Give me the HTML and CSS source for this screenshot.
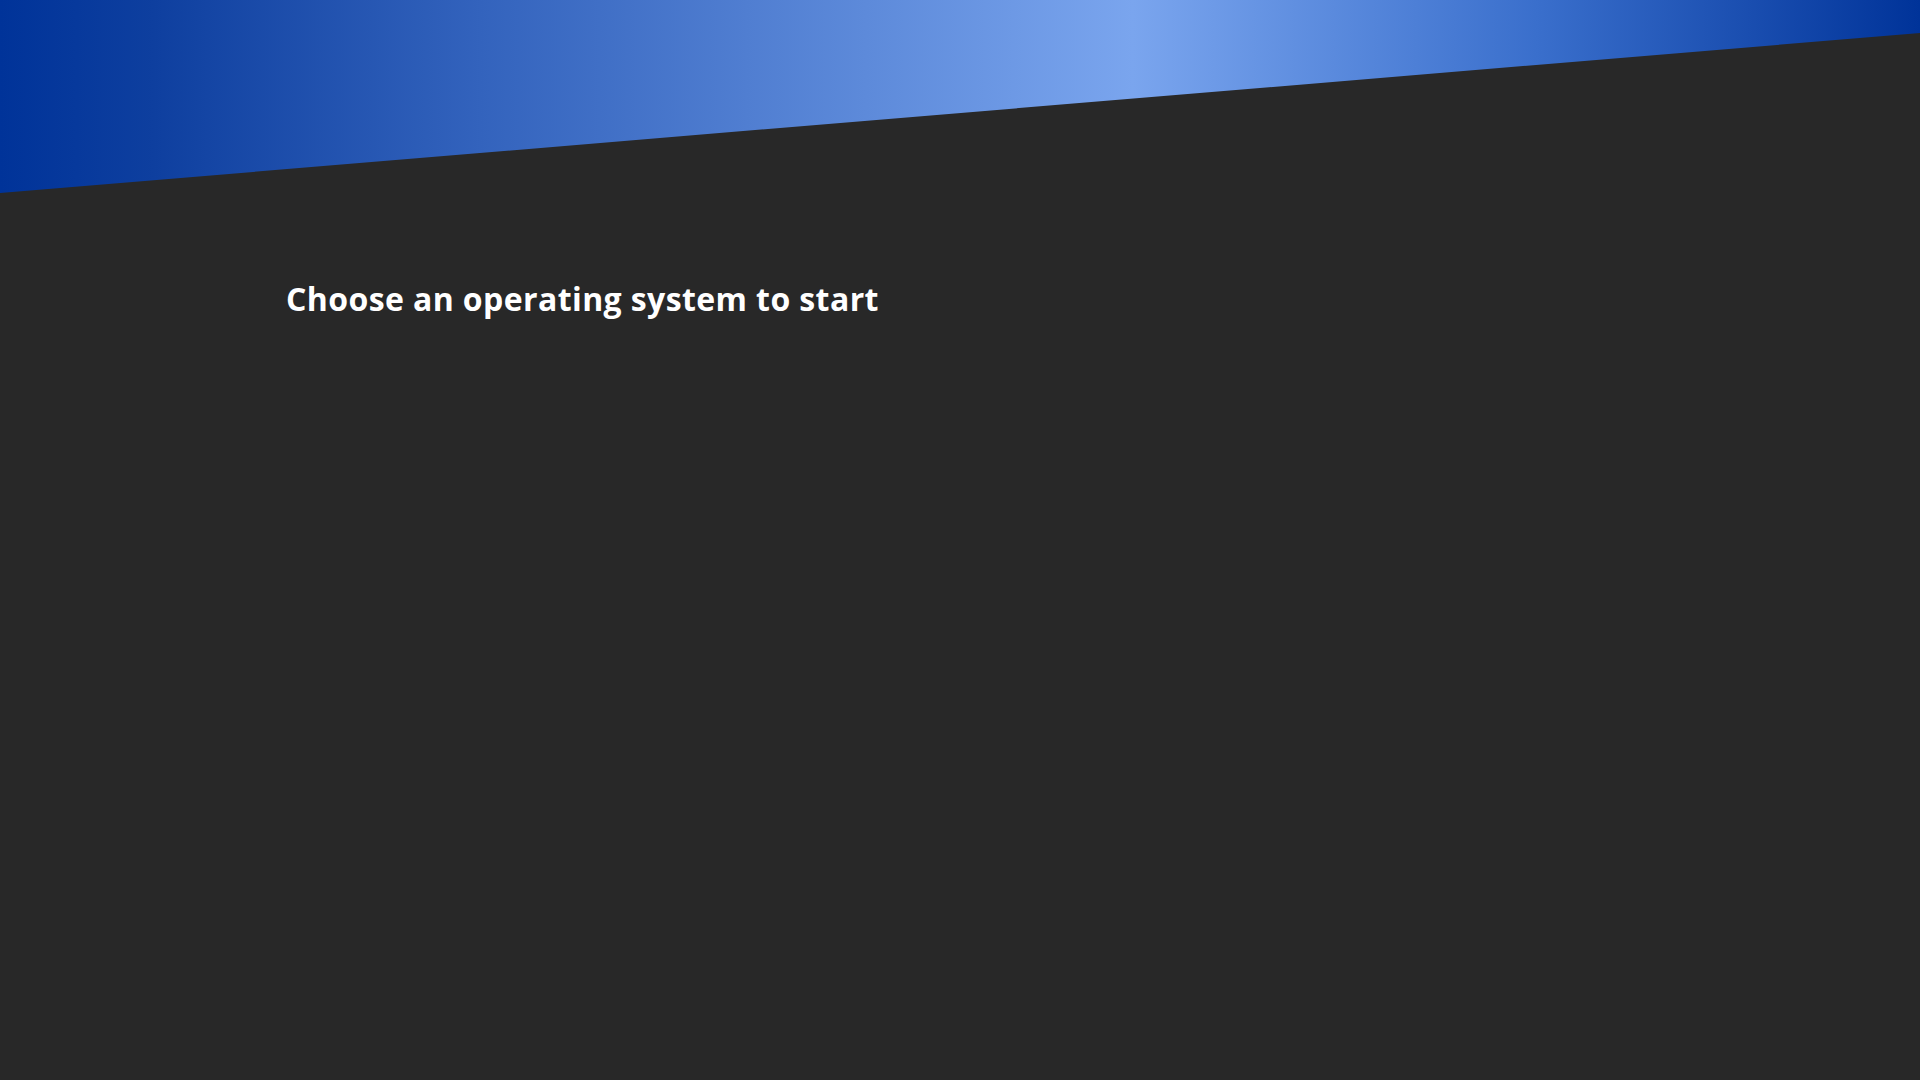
FILE: index.html
```html
<!DOCTYPE html>
<html lang="en">
<head>
<meta charset="utf-8">
<title>Choose an operating system</title>
<link rel="stylesheet" href="styles.css">
</head>
<body>
<div class="banner"></div>
<main class="content">
  <h1 class="title">Choose an operating system to start</h1>
</main>
</body>
</html>
```
FILE: styles.css
```css
html, body {
  margin: 0;
  padding: 0;
  height: 100%;
}
body {
  background: #282828;
  font-family: "Open Sans", "Noto Sans", sans-serif;
  overflow: hidden;
}
.banner {
  height: 193px;
  background: linear-gradient(to right, #003399 0%, #0e3f9f 8%, #3363bd 25%, #7aa5ee 59%, #3a6fcc 80%, #003399 100%);
  clip-path: polygon(0 0, 100% 0, 100% 33px, 0 193px);
}
.content {
  padding: 85px 0 0 286px;
}
.title {
  margin: 0;
  color: #ffffff;
  font-size: 32px;
  font-weight: 700;
  line-height: 42px;
  letter-spacing: 0.4px;
}
```
